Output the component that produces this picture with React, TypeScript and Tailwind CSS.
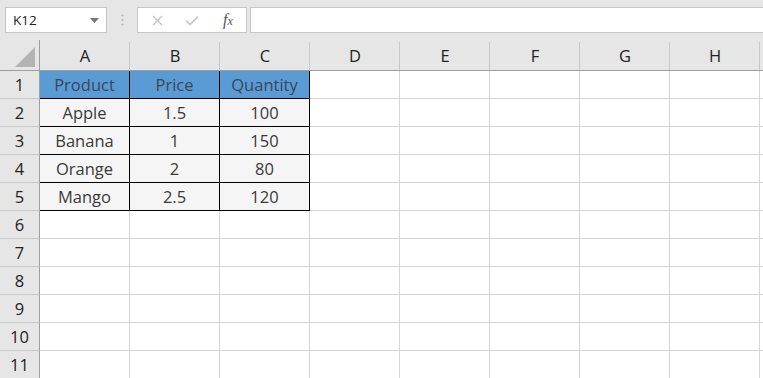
import React from "react";

const cols = ["A", "B", "C", "D", "E", "F", "G", "H", ""];
const data: string[][] = [
  ["Product", "Price", "Quantity"],
  ["Apple", "1.5", "100"],
  ["Banana", "1", "150"],
  ["Orange", "2", "80"],
  ["Mango", "2.5", "120"],
];

export default function App() {
  const rows = Array.from({ length: 11 }, (_, i) => i + 1);
  return (
    <div
      className="w-[763px] h-[378px] overflow-hidden bg-white"
      style={{ fontFamily: '"Open Sans", "Noto Sans", sans-serif' }}
    >
      {/* Toolbar */}
      <div className="h-[40px] bg-[#e6e6e6] flex items-start pt-[7px]">
        <div className="ml-[5px] w-[102px] h-[26px] bg-white border border-[#c6c6c6] flex items-center pl-[7px] pr-[7px]">
          <span className="text-[13.5px] text-[#222] flex-1">K12</span>
          <svg width="9" height="5" viewBox="0 0 9 5">
            <path d="M0 0 L9 0 L4.5 5 Z" fill="#777" />
          </svg>
        </div>
        <div className="w-[30px] h-[26px] flex items-center justify-center">
          <svg width="3" height="12" viewBox="0 0 3 12">
            <circle cx="1.5" cy="1.5" r="1.1" fill="#b5b5b5" />
            <circle cx="1.5" cy="6" r="1.1" fill="#b5b5b5" />
            <circle cx="1.5" cy="10.5" r="1.1" fill="#b5b5b5" />
          </svg>
        </div>
        <div className="w-[110px] h-[26px] bg-white border border-[#c6c6c6] flex items-center">
          <div className="w-[36px] flex justify-center pl-[2px]">
            <svg width="11" height="11" viewBox="0 0 11 11">
              <path d="M1 1 L10 10 M10 1 L1 10" stroke="#c4c4c4" strokeWidth="1.3" />
            </svg>
          </div>
          <div className="w-[36px] flex justify-center">
            <svg width="14" height="11" viewBox="0 0 14 11">
              <path d="M1 5.5 L5 9.5 L13 1.5" stroke="#c4c4c4" strokeWidth="1.6" fill="none" />
            </svg>
          </div>
          <div className="w-[36px] flex justify-center">
            <span
              className="text-[16px] italic text-[#555] leading-none"
              style={{ fontFamily: '"Liberation Serif", "DejaVu Serif", serif' }}
            >
              f<span className="text-[12px]">x</span>
            </span>
          </div>
        </div>
        <div className="ml-[3px] flex-1 h-[26px] bg-white border border-[#c6c6c6] border-r-0" />
      </div>

      {/* Grid */}
      <div className="grid grid-cols-[40px_repeat(9,90px)] grid-rows-[31px_repeat(11,28px)]">
        <div className="bg-[#e6e6e6] border-r border-b border-[#9e9e9e] relative">
          <svg className="absolute right-[4px] bottom-[3px]" width="20" height="20" viewBox="0 0 20 20">
            <path d="M20 0 L20 20 L0 20 Z" fill="#b4b4b4" />
          </svg>
        </div>
        {cols.map((c, i) => (
          <div
            key={i}
            className="bg-[#e6e6e6] border-b border-[#9e9e9e] relative flex items-center justify-center pt-[3px] text-[16.5px] text-[#222]"
          >
            {c}
            <div className="absolute right-0 top-[2px] bottom-0 w-px bg-[#c8c8c8]" />
          </div>
        ))}
        {rows.map((r) => (
          <React.Fragment key={r}>
            <div className="bg-[#e6e6e6] border-r border-b border-[#c8c8c8] border-r-[#9e9e9e] flex items-center justify-center pt-[2px] text-[16.5px] text-[#222]">
              {r}
            </div>
            {cols.map((c, ci) => {
              const inTable = r <= 5 && ci < 3;
              if (inTable) {
                const header = r === 1;
                return (
                  <div
                    key={ci}
                    className={
                      "border-r border-b border-black flex items-center justify-center pt-[2px] text-[16.5px] " +
                      (header ? "bg-[#5b9bd5] text-[#3b4656]" : "bg-[#f5f5f5] text-[#3a3a3a]")
                    }
                  >
                    {data[r - 1][ci]}
                  </div>
                );
              }
              return <div key={ci} className="border-b border-r border-[#d4d4d4]" />;
            })}
          </React.Fragment>
        ))}
      </div>
    </div>
  );
}
